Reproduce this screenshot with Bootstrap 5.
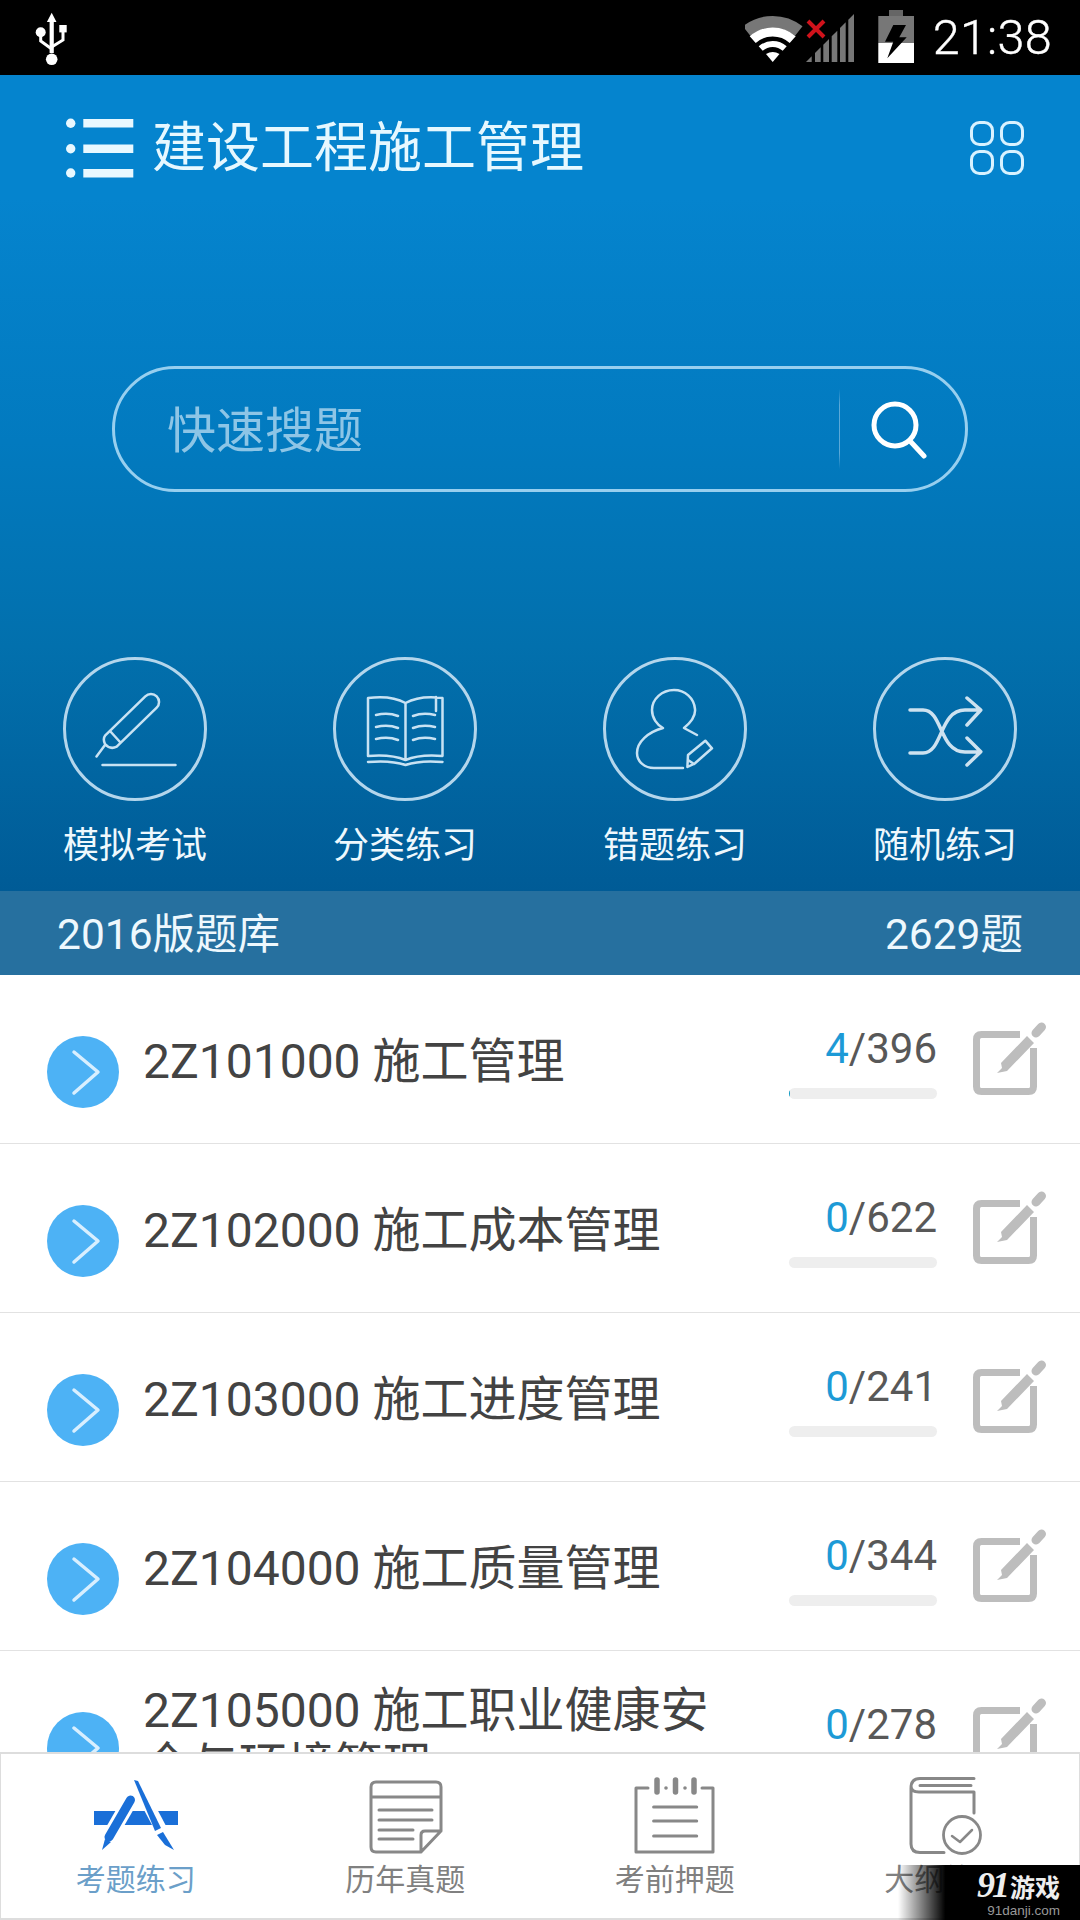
<!DOCTYPE html>
<html lang="zh-CN">
<head>
<meta charset="utf-8">
<title>建设工程施工管理</title>
<link href="https://cdn.jsdelivr.net/npm/bootstrap@5.3.0/dist/css/bootstrap.min.css" rel="stylesheet">
<style>
html,body{margin:0;background:#fff}
body{font-family:Roboto,"Noto Sans CJK SC",sans-serif;color:#434343}
.phone{width:1080px;height:1920px;overflow:hidden;position:relative;background:#fff}
.statusbar{height:75px;background:#000;flex:none;padding-left:34px;padding-right:28px}
.clock{font-size:48.5px;color:#fff;font-weight:300;line-height:75px;margin-left:18px;letter-spacing:.3px;-webkit-text-stroke:.4px #fff}
.hero{height:816px;flex:none;background:linear-gradient(#0584ce 15%,#027abf 45%,#0270ad 70%,#005b96 100%)}
.headbar{height:146px;padding-left:66px;padding-right:56px}
.apptitle{font-size:54px;color:#e6f8ff;line-height:1;margin:2px 0 0 18px;font-weight:400}
.searchbox{height:126px;margin:145px 112px 0;border:3px solid #97cfef;border-radius:63px;padding-left:52px;padding-right:38px}
.hint{font-size:49px;color:#8dc5e6;line-height:1;margin-top:5px}
.vline{width:1px;height:80px;background:linear-gradient(transparent,#5ba9d8 20%,#5ba9d8 80%,transparent);margin-right:29px}
.quick{margin-top:165px}
.disc{width:144px;height:144px;display:block;margin:0 auto}
.qlabel{font-size:36px;line-height:44px;color:#eef8fd;margin-top:23px}
.band{height:84px;flex:none;background:#26709f;color:#eef8fd;font-size:42.5px;padding:3px 57px 0}
.lesson-list{flex:1 1 0;min-height:0;overflow:hidden;border-radius:0}
.lesson{height:169px;flex:none;padding:0 0 0 47px;border:0;border-bottom:2px solid #e2e2e2;display:flex;background:#fff}
.bullet{width:72px;height:72px;margin-top:61px;flex:none;display:block}
.lname{width:596px;margin-left:24px;padding-top:5px;font-size:48px;line-height:55px;color:#434343;flex:none}
.stat{width:148px;margin-left:50px;margin-top:50px;flex:none}
.tally{font-size:42px;line-height:48px;color:#585858;text-align:right}
.tally b{font-weight:400;color:#1d9ad6}
.stat .progress{height:11px;margin-top:15px;background:#eee;border-radius:6px}
.stat .progress-bar{background:#0e9ac4}
.pen{width:76px;height:78px;margin-left:33px;margin-top:45px;flex:none;display:block}
.tabbar{height:168px;flex:none;background:#fff;border:1px solid #ddd;border-top-width:2px;border-bottom-width:2px}
.tabicon{display:block;margin:22px auto 0;width:100px;height:80px}
.tabtext{font-size:30px;line-height:36px;color:#808080;margin-top:6px}
.tabtext.on{color:#6b9fc9}
.stamp{position:absolute;right:0;bottom:0;width:182px;height:55px;background:linear-gradient(90deg,transparent,#000 26%);padding-right:20px;color:#eee}
.stampname{font-size:25px;line-height:25px;font-weight:700;margin-top:8px;white-space:nowrap}
.stampname i{font-family:"Liberation Serif",serif;font-size:36px;letter-spacing:-3px;margin-right:3px;line-height:25px}
.stampurl{font-family:"Liberation Sans",sans-serif;font-size:13.5px;line-height:16px;color:#999;margin-top:2px}
.ln{fill:none;stroke:#c8e2f3;stroke-width:2.5;stroke-linecap:round;stroke-linejoin:round}
.ring{fill:none;stroke:#b4d6ec;stroke-width:3}
.tg{fill:none;stroke:#888;stroke-width:3;stroke-linecap:round;stroke-linejoin:round}
</style>
</head>
<body>
<svg class="d-none" aria-hidden="true">
  <symbol id="go" viewBox="0 0 72 72"><circle cx="36" cy="36" r="36" fill="#4db2f5"/><path d="M27 16L51 36L27 57" fill="none" stroke="#d8efff" stroke-width="3.500" stroke-linecap="round" stroke-linejoin="round"/></symbol>
  <symbol id="edit" viewBox="970 1020 76 78"><path d="M1020 1034.500H981.500Q976.500 1034.500 976.500 1039.500V1086.500Q976.500 1091.500 981.500 1091.500H1028.500Q1033.500 1091.500 1033.500 1086.500V1048" fill="none" stroke="#bdbdbd" stroke-width="7"/><path d="M1002 1068L997 1073L1007 1071L1034 1043L1027 1036L1001 1063Z" fill="#bdbdbd"/><path d="M1036 1033L1041.500 1027" fill="none" stroke="#bdbdbd" stroke-width="9" stroke-linecap="round"/></symbol>
</svg>
<div class="phone d-flex flex-column">
  <div class="statusbar d-flex align-items-center justify-content-between">
    <svg width="36" height="60" viewBox="34 8 36 60">
      <path d="M51.700 12.700L56.500 22H53.800V53H49.600V22H46.900Z" fill="#fff"/>
      <circle cx="51.700" cy="59.300" r="5.800" fill="#fff"/><circle cx="40.700" cy="32.300" r="5" fill="#fff"/>
      <rect x="59.300" y="25" width="7.400" height="7.400" fill="#fff"/>
      <path d="M40.700 35V41L51.700 49M63 32V40L51.700 47" fill="none" stroke="#fff" stroke-width="3"/>
    </svg>
    <div class="d-flex align-items-center">
      <svg width="170" height="75" viewBox="745 0 170 75">
        <path d="M746.600 31A42 42 0 0 1 798.800 31" fill="none" stroke="#777" stroke-width="12"/>
        <path d="M752.700 39.700A30 30 0 0 1 792.700 39.700" fill="none" stroke="#fff" stroke-width="9"/>
        <path d="M760.700 48.600A18 18 0 0 1 784.700 48.600" fill="none" stroke="#fff" stroke-width="6"/>
        <path d="M772.700 62L766 54Q772.700 50 779.500 54Z" fill="#fff"/>
        <path d="M806 62L811.700 56.300V62ZM815 62V53L820.700 47.300V62ZM823.300 62V44.700L829 39V62ZM831.700 62V36.300L837.300 30.700V62ZM840 62V28L845.700 22.300V62ZM848.300 62V19.700L854 14V62Z" fill="#777"/>
        <path d="M808 21L824 37M824 21L808 37" stroke="#d0121b" stroke-width="4"/>
        <rect x="889" y="10" width="14" height="6" fill="#666"/>
        <rect x="878.300" y="16" width="35.700" height="27" fill="#777"/>
        <rect x="878.300" y="43" width="35.700" height="20" fill="#fff"/>
        <path d="M893.300 25H906L899.300 37.300H906.700L887.300 58.300L893.300 41.700H885Z" fill="#000"/>
      </svg>
      <span class="clock">21:38</span>
    </div>
  </div>

  <div class="hero">
    <div class="headbar d-flex align-items-center">
      <svg width="68" height="60" viewBox="66 118 68 60">
        <g fill="#e8f8ff"><circle cx="70.700" cy="123.300" r="4.700"/><circle cx="70.700" cy="148.700" r="4.700"/><circle cx="70.700" cy="173" r="4.700"/>
        <rect x="83.300" y="119" width="50" height="8.500"/><rect x="83.300" y="144.500" width="50" height="8.500"/><rect x="83.300" y="169" width="50" height="8.500"/></g>
      </svg>
      <h1 class="apptitle">建设工程施工管理</h1>
      <svg class="ms-auto" width="54" height="54" viewBox="970 121 54 54">
        <g fill="none" stroke="#d8f2ff" stroke-width="3"><rect x="971.500" y="122.500" width="21" height="22" rx="8"/><rect x="1001.500" y="122.500" width="21" height="22" rx="8"/><rect x="971.500" y="151.500" width="21" height="22" rx="8"/><rect x="1001.500" y="151.500" width="21" height="22" rx="8"/></g>
      </svg>
    </div>
    <div class="searchbox d-flex align-items-center">
      <span class="hint me-auto">快速搜题</span>
      <span class="vline"></span>
      <svg width="58" height="60" viewBox="871 399 58 60"><circle cx="897" cy="425" r="21" fill="none" stroke="#fff" stroke-width="5"/><path d="M913 442L926 456" stroke="#fff" stroke-width="5" stroke-linecap="round"/></svg>
    </div>
    <div class="row g-0 quick text-center">
      <div class="col-3">
        <svg class="disc" viewBox="0 0 144 144"><circle class="ring" cx="72" cy="72" r="70.500"/>
          <path class="ln" d="M42.300 78.300L82.300 39.300A8 8 0 0 1 93.700 50.700L53.700 89.700Q47 93 42 87Q39.500 82 42.300 78.300ZM47 74L57 85M42 88L33.500 99.500M39.500 108H112.500"/>
        </svg>
        <div class="qlabel">模拟考试</div>
      </div>
      <div class="col-3">
        <svg class="disc" viewBox="0 0 144 144"><circle class="ring" cx="72" cy="72" r="70.500"/>
          <path class="ln" d="M72.500 46Q58 38 35 41V99Q58 97 72.500 103Q87 97 109.500 99V41Q87 38 72.500 46V103M35 105Q58 103 72.500 108Q87 103 109.500 105M43 58Q55 55 65 59M43 70Q55 67 65 71M43 82Q55 79 65 83M80 59Q90 55 102 58M80 71Q90 67 102 70M80 83Q90 79 102 82M103 40V54"/>
        </svg>
        <div class="qlabel">分类练习</div>
      </div>
      <div class="col-3">
        <svg class="disc" viewBox="0 0 144 144"><circle class="ring" cx="72" cy="72" r="70.500"/>
          <path class="ln" d="M94 78L81 71Q93 61 92 52C91 41 82 33 71 33C59 33 49 42 49 53C49 61 54 68 60 71C45 75 34 85 34 96C34 105 42 111 51 111H80M85 98L102.300 83.700L109 91.300L92 106.300L84.400 110ZM85 103L91 107"/>
        </svg>
        <div class="qlabel">错题练习</div>
      </div>
      <div class="col-3">
        <svg class="disc" viewBox="0 0 144 144"><circle class="ring" cx="72" cy="72" r="70.500"/>
          <path class="ln" style="stroke-width:3.500;stroke:#cde2f0" d="M37 53H50C70 53 66 95 92 95H107M37 96H50C70 96 66 53 92 53H107M94 41L107.800 53L94 68M94 81L107.800 94.700L94 108"/>
        </svg>
        <div class="qlabel">随机练习</div>
      </div>
    </div>
  </div>

  <div class="band d-flex align-items-center justify-content-between"><span>2016版题库</span><span>2629题</span></div>

  <div class="list-group list-group-flush lesson-list">
    <div class="list-group-item lesson">
      <svg class="bullet"><use href="#go"/></svg>
      <div class="lname align-self-center">2Z101000 施工管理</div>
      <div class="stat"><div class="tally"><b>4</b>/396</div><div class="progress"><div class="progress-bar" style="width:1%"></div></div></div>
      <svg class="pen"><use href="#edit"/></svg>
    </div>
    <div class="list-group-item lesson">
      <svg class="bullet"><use href="#go"/></svg>
      <div class="lname align-self-center">2Z102000 施工成本管理</div>
      <div class="stat"><div class="tally"><b>0</b>/622</div><div class="progress"><div class="progress-bar" style="width:0%"></div></div></div>
      <svg class="pen"><use href="#edit"/></svg>
    </div>
    <div class="list-group-item lesson">
      <svg class="bullet"><use href="#go"/></svg>
      <div class="lname align-self-center">2Z103000 施工进度管理</div>
      <div class="stat"><div class="tally"><b>0</b>/241</div><div class="progress"><div class="progress-bar" style="width:0%"></div></div></div>
      <svg class="pen"><use href="#edit"/></svg>
    </div>
    <div class="list-group-item lesson">
      <svg class="bullet"><use href="#go"/></svg>
      <div class="lname align-self-center">2Z104000 施工质量管理</div>
      <div class="stat"><div class="tally"><b>0</b>/344</div><div class="progress"><div class="progress-bar" style="width:0%"></div></div></div>
      <svg class="pen"><use href="#edit"/></svg>
    </div>
    <div class="list-group-item lesson">
      <svg class="bullet"><use href="#go"/></svg>
      <div class="lname align-self-center">2Z105000 施工职业健康安全与环境管理</div>
      <div class="stat"><div class="tally"><b>0</b>/278</div><div class="progress"><div class="progress-bar" style="width:0%"></div></div></div>
      <svg class="pen"><use href="#edit"/></svg>
    </div>
  </div>

  <div class="tabbar row g-0 text-center">
    <div class="col-3">
      <svg class="tabicon" viewBox="85 1774 100 80">
        <path d="M93 1809H177V1823H93Z" fill="#1a6fd8"/>
        <path d="M130 1797L104 1842" stroke="#fff" stroke-width="15"/>
        <path d="M135 1780L171 1848" stroke="#fff" stroke-width="12"/>
        <path d="M129.500 1798L108 1835" stroke="#1a6fd8" stroke-width="9" stroke-linecap="round"/>
        <path d="M104 1837L110 1840L101 1848Z" fill="#1a6fd8"/>
        <path d="M133 1778L137 1779L160 1826L154 1829Z" fill="#1a6fd8"/>
        <path d="M156 1833L162 1830L173 1848L164 1843Z" fill="#1a6fd8"/>
      </svg>
      <div class="tabtext on">考题练习</div>
    </div>
    <div class="col-3">
      <svg class="tabicon" viewBox="355 1774 100 80">
        <path class="tg" d="M376 1780H436Q441 1780 441 1785V1829L421 1850H376Q371 1850 371 1845V1785Q371 1780 376 1780ZM371 1795H441M379 1808H432M379 1818H432M379 1828H413M379 1837H413M421 1850V1833Q421 1829 425 1829H441"/>
      </svg>
      <div class="tabtext">历年真题</div>
    </div>
    <div class="col-3">
      <svg class="tabicon" viewBox="625 1774 100 80">
        <path class="tg" d="M648 1786H636V1850H713V1786H702M653.600 1805H696.700M653.600 1819H696.700M653.600 1834H696.700"/>
        <path d="M657 1778V1790M675.500 1778V1790M694 1778V1790" stroke="#888" stroke-width="5.500" stroke-linecap="round"/>
        <circle cx="666" cy="1786" r="1.800" fill="#888"/><circle cx="685" cy="1786" r="1.800" fill="#888"/>
      </svg>
      <div class="tabtext">考前押题</div>
    </div>
    <div class="col-3">
      <svg class="tabicon" viewBox="895 1774 100 80">
        <path class="tg" d="M975 1776.500H921Q912 1776.500 912 1786V1842Q912 1850.500 921 1850.500H945M975 1790H920Q912 1790 912 1784M921 1783.500H972M975 1790V1811"/>
        <circle cx="963" cy="1833" r="18.500" fill="none" stroke="#888" stroke-width="2.800"/>
        <path d="M953 1834L961 1840L973 1828" fill="none" stroke="#888" stroke-width="2.500" stroke-linecap="round" stroke-linejoin="round"/>
      </svg>
      <div class="tabtext">大纲练习</div>
    </div>
  </div>

  <div class="stamp d-flex flex-column align-items-end">
    <div class="stampname"><i>91</i>游戏</div>
    <div class="stampurl">91danji.com</div>
  </div>
</div>
</body>
</html>
